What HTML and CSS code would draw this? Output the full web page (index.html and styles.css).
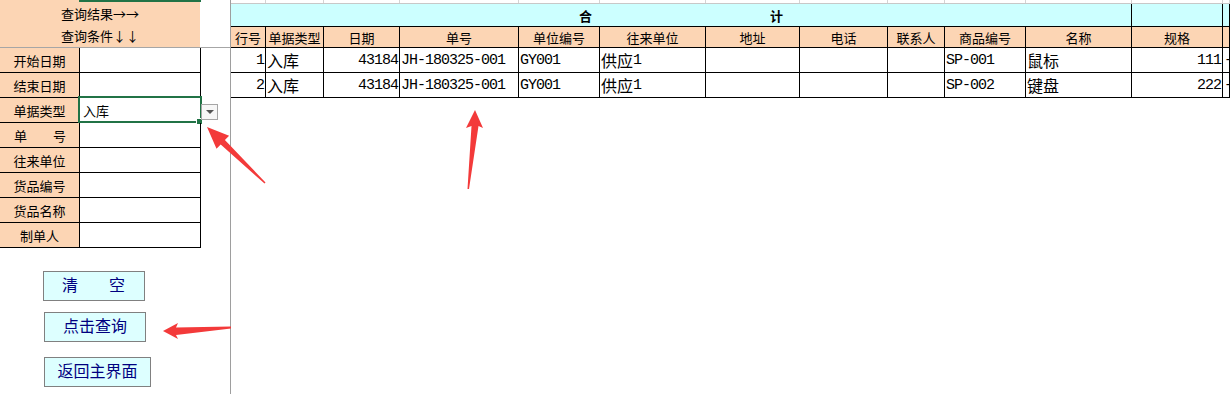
FILE: index.html
```html
<!DOCTYPE html>
<html lang="zh">
<head>
<meta charset="utf-8">
<title>查询</title>
<link rel="stylesheet" href="styles.css">
</head>
<body>
<div class="sheet">
  <aside class="left">
    <div class="cap">
      <div class="cap-box">
        <div class="cap-sel"></div>
        <div class="cap-line">查询结果→→</div>
        <div class="cap-line">查询条件↓↓</div>
      </div>
      <div class="cap-gap"></div>
    </div>
    <div class="form">
      <div class="lbl">开始日期</div><div class="inp"></div>
      <div class="lbl">结束日期</div><div class="inp"></div>
      <div class="lbl">单据类型</div>
      <div class="inp sel">入库<span class="sel-frame"></span><span class="handle"></span><span class="dd"><span class="tri"></span></span></div>
      <div class="lbl spread"><span>单</span><span>号</span></div><div class="inp"></div>
      <div class="lbl">往来单位</div><div class="inp"></div>
      <div class="lbl">货品编号</div><div class="inp"></div>
      <div class="lbl">货品名称</div><div class="inp"></div>
      <div class="lbl">制单人</div><div class="inp"></div>
    </div>
    <div class="btns">
      <div class="btn b1"><span>清</span><span>空</span></div>
      <div class="btn b2">点击查询</div>
      <div class="btn b3">返回主界面</div>
    </div>
  </aside>
  <main class="right">
    <div class="grid toprow">
      <div></div><div></div><div></div><div></div><div></div><div></div><div></div><div></div><div></div><div></div><div></div><div></div><div></div>
    </div>
    <div class="grid table">
      <div class="c cy span11"><b>合</b><b>计</b></div>
      <div class="c cy"></div>
      <div class="c cy"></div>

      <div class="c hd">行号</div>
      <div class="c hd">单据类型</div>
      <div class="c hd">日期</div>
      <div class="c hd">单号</div>
      <div class="c hd">单位编号</div>
      <div class="c hd">往来单位</div>
      <div class="c hd">地址</div>
      <div class="c hd">电话</div>
      <div class="c hd">联系人</div>
      <div class="c hd">商品编号</div>
      <div class="c hd">名称</div>
      <div class="c hd">规格</div>
      <div class="c hd"></div>

      <div class="c d r"><span class="n">1</span></div>
      <div class="c d">入库</div>
      <div class="c d r"><span class="n">43184</span></div>
      <div class="c d"><span class="n">JH-180325-001</span></div>
      <div class="c d"><span class="n">GY001</span></div>
      <div class="c d">供应<span class="n">1</span></div>
      <div class="c d"></div>
      <div class="c d"></div>
      <div class="c d"></div>
      <div class="c d"><span class="n">SP-001</span></div>
      <div class="c d">鼠标</div>
      <div class="c d r"><span class="n">111</span></div>
      <div class="c d"><span class="n">-</span></div>

      <div class="c d r"><span class="n">2</span></div>
      <div class="c d">入库</div>
      <div class="c d r"><span class="n">43184</span></div>
      <div class="c d"><span class="n">JH-180325-001</span></div>
      <div class="c d"><span class="n">GY001</span></div>
      <div class="c d">供应<span class="n">1</span></div>
      <div class="c d"></div>
      <div class="c d"></div>
      <div class="c d"></div>
      <div class="c d"><span class="n">SP-002</span></div>
      <div class="c d">键盘</div>
      <div class="c d r"><span class="n">222</span></div>
      <div class="c d"><span class="n">-</span></div>
    </div>
  </main>
  <svg class="arrows" width="1230" height="394" viewBox="0 0 1230 394" aria-hidden="true">
    <polygon points="207,127 229.1,135.8 224.9,140.1 265.5,182.5 264.5,183.5 220.7,144.5 216.5,148.8" />
    <polygon points="475,110 483,128 478.5,126 469,189 467.5,189 471.5,126 466,128" />
    <polygon points="163,331 178,323 176,327.5 231,326.5 231,328.5 176,335 178,339" />
  </svg>
</div>
</body>
</html>
```

FILE: styles.css
```css
* { box-sizing: border-box; }

html, body {
  margin: 0;
  padding: 0;
  background: #ffffff;
}

body {
  font-family: "Noto Sans CJK SC", "Noto Sans", sans-serif;
  color: #000;
}

.sheet {
  position: relative;
  display: flex;
  width: 1230px;
  height: 394px;
  overflow: hidden;
}

/* ---------- left frozen panel ---------- */
.left {
  flex: none;
  width: 231px;
  border-right: 1px solid #9e9e9e;
}

.cap {
  display: flex;
  height: 48px;
  border-bottom: 1px solid #a6a6a6;
}

.cap-box {
  position: relative;
  width: 200px;
  background: #fcd5b4;
  padding-top: 3px;
}

.cap-gap { flex: 1; }

.cap-sel {
  position: absolute;
  top: 0;
  left: 79px;
  width: 122px;
  height: 2px;
  background: #217346;
}

.cap-line {
  height: 22px;
  line-height: 22px;
  font-size: 13px;
  text-align: center;
}

.form {
  display: grid;
  grid-template-columns: 80px 121px;
  grid-auto-rows: 25px;
  width: 201px;
}

.lbl {
  display: flex;
  align-items: center;
  justify-content: center;
  background: #fcd5b4;
  border-right: 1px solid #000;
  border-bottom: 1px solid #000;
  font-size: 13px;
}

.lbl.spread {
  justify-content: space-between;
  padding: 0 13px 0 14px;
}

.inp {
  position: relative;
  display: flex;
  align-items: center;
  padding-left: 3px;
  border-right: 1px solid #000;
  border-bottom: 1px solid #000;
  font-size: 13px;
}

.sel-frame {
  position: absolute;
  left: -2px;
  top: -2px;
  width: 124px;
  height: 27px;
  border: 2px solid #217346;
}

.handle {
  position: absolute;
  left: 117px;
  top: 21px;
  width: 5px;
  height: 5px;
  background: #217346;
  border: 1px solid #fff;
  box-sizing: content-box;
  margin: -1px;
}

.dd {
  position: absolute;
  left: 121px;
  top: 6px;
  width: 17px;
  height: 16px;
  border: 1px solid #a6a6a6;
  background: #f7f7f7;
  display: flex;
  align-items: center;
  justify-content: center;
}

.tri {
  width: 0;
  height: 0;
  border-left: 4px solid transparent;
  border-right: 4px solid transparent;
  border-top: 4px solid #555;
}

.btns {
  display: flex;
  flex-direction: column;
  align-items: flex-start;
  padding-top: 23px;
}

.btn {
  display: flex;
  align-items: center;
  justify-content: center;
  height: 30px;
  padding-bottom: 4px;
  border: 1px solid #808080;
  background: #ddffff;
  color: #000080;
  font-size: 16px;
}

.b1 {
  margin-left: 43px;
  width: 102px;
  justify-content: space-between;
  padding-left: 18px;
  padding-right: 19px;
}

.b2 {
  margin-top: 11px;
  margin-left: 44px;
  width: 102px;
}

.b3 {
  margin-top: 15px;
  margin-left: 44px;
  width: 107px;
}

/* ---------- right data table ---------- */
.right {
  flex: 1;
  min-width: 0;
  overflow: hidden;
}

.grid {
  display: grid;
  grid-template-columns: 35px 58px 76px 119px 81px 106px 94px 88px 57px 81px 106px 91px 1fr;
}

.toprow {
  height: 4px;
  border-bottom: 1px solid #c8c8c8;
}

.toprow > div {
  border-right: 1px solid #d4d4d4;
}

.table {
  grid-template-rows: 23px 21px 25px 25px;
}

.c {
  display: flex;
  align-items: center;
  border-right: 1px solid #000;
  border-bottom: 1px solid #000;
  white-space: nowrap;
  overflow: hidden;
}

.cy {
  background: #ccffff;
}

.span11 {
  grid-column: span 11;
  justify-content: center;
  gap: 178px;
  font-size: 13px;
}

.span11 b { font-weight: 700; }

.hd {
  background: #fcd5b4;
  justify-content: center;
  font-size: 13px;
}

.d {
  font-size: 16px;
  padding-left: 1px;
}

.d.r {
  justify-content: flex-end;
  padding-left: 0;
  padding-right: 1px;
}

.n {
  font-family: "Liberation Mono", monospace;
  font-size: 15px;
  letter-spacing: -1px;
}

/* ---------- annotation arrows ---------- */
.arrows {
  position: absolute;
  left: 0;
  top: 0;
  pointer-events: none;
}

.arrows polygon {
  fill: #f33a3a;
}
```
